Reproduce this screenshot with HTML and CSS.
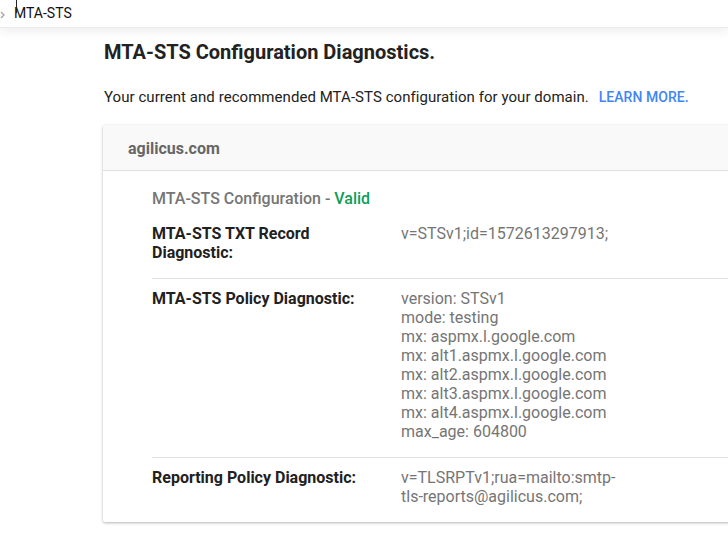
FILE: index.html
```html
<!DOCTYPE html>
<html>
<head>
<meta charset="utf-8">
<link rel="stylesheet" href="styles.css">
</head>
<body>
<header class="topbar">
  <svg class="chev" width="6" height="8" viewBox="0 0 6 8"><path d="M1 1 L4 4 L1 7" fill="none" stroke="#9e9e9e" stroke-width="1.2"/></svg>
  <span class="topbar-title">MTA-STS</span>
  <span class="cursor"></span>
</header>
<main class="content">
  <h1 class="page-title">MTA-STS Configuration Diagnostics.</h1>
  <p class="intro">Your current and recommended MTA-STS configuration for your domain. <a class="learn" href="#">LEARN MORE.</a></p>
  <section class="card">
    <div class="card-header">agilicus.com</div>
    <div class="card-body">
      <div class="config-title">MTA-STS Configuration - <span class="valid">Valid</span></div>
      <div class="row row-first">
        <div class="label">MTA-STS TXT Record<br>Diagnostic:</div>
        <div class="value">v=STSv1;id=1572613297913;</div>
      </div>
      <div class="row">
        <div class="label">MTA-STS Policy Diagnostic:</div>
        <div class="value">version: STSv1<br>mode: testing<br>mx: aspmx.l.google.com<br>mx: alt1.aspmx.l.google.com<br>mx: alt2.aspmx.l.google.com<br>mx: alt3.aspmx.l.google.com<br>mx: alt4.aspmx.l.google.com<br>max_age: 604800</div>
      </div>
      <div class="row">
        <div class="label">Reporting Policy Diagnostic:</div>
        <div class="value">v=TLSRPTv1;rua=mailto:smtp-<br>tls-reports@agilicus.com;</div>
      </div>
    </div>
  </section>
</main>
</body>
</html>
```

FILE: styles.css
```css
html {
  overflow: hidden;
}

body {
  margin: 0;
  padding: 0;
  background: #fff;
  font-family: Roboto, "Liberation Sans", sans-serif;
}

.topbar {
  position: relative;
  height: 27px;
  display: flex;
  align-items: center;
  background: #fff;
  box-shadow: 0 2px 12px rgba(0, 0, 0, 0.09);
  border-bottom: 1px solid #ececec;
}

.chev {
  margin-top: 2px;
}

.topbar-title {
  margin-left: 8px;
  font-size: 14px;
  color: #111;
  margin-top: -2px;
}

.cursor {
  position: absolute;
  left: 16px;
  top: 0;
  width: 1px;
  height: 13px;
  background: #222;
}

.content {
  padding-left: 104px;
  padding-top: 12px;
  padding-bottom: 20px;
}

.page-title {
  margin: 0;
  font-size: 20px;
  font-weight: 700;
  color: #222;
  line-height: 24px;
}

.intro {
  margin: 24px 0 0;
  font-size: 15px;
  letter-spacing: 0.05px;
  color: #222;
  line-height: 18px;
}

.learn {
  margin-left: 6px;
  color: #4285f4;
  text-decoration: none;
  font-weight: 500;
  font-size: 14px;
}

.card {
  margin-top: 19px;
  width: 720px;
  margin-left: -1px;
  background: #fff;
  box-shadow: 0 1px 3px rgba(0, 0, 0, 0.3);
  border-radius: 2px;
}

.card-header {
  height: 46px;
  display: flex;
  align-items: center;
  padding-left: 25px;
  padding-top: 2px;
  box-sizing: border-box;
  background: #f9f9f9;
  border-bottom: 1px solid #e0e0e0;
  font-size: 16px;
  font-weight: 700;
  color: #666;
}

.card-body {
  padding: 18px 0 0 49px;
}

.config-title {
  font-size: 16px;
  font-weight: 500;
  color: #757575;
  line-height: 20px;
}

.valid {
  color: #0f9d58;
}

.row {
  display: flex;
  padding: 10px 0 16px;
  line-height: 19px;
  font-size: 16px;
}

.row-first {
  padding-top: 15px;
}

.row + .row {
  border-top: 1px solid #e0e0e0;
}

.label {
  width: 249px;
  flex: none;
  font-weight: 700;
  color: #212121;
}

.value {
  color: #757575;
}
```
